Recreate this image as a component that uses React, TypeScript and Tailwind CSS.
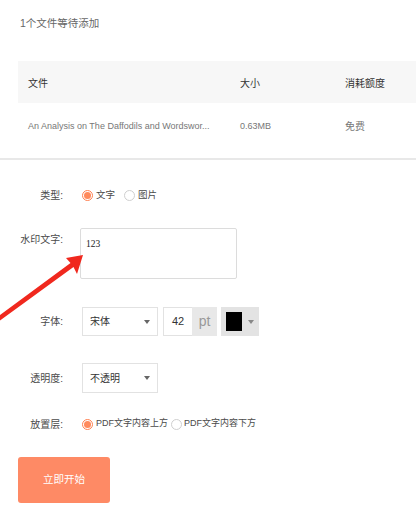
function Radio({ checked }: { checked: boolean }) {
  return checked ? (
    <span className="flex h-[11px] w-[11px] shrink-0 items-center justify-center rounded-full border border-[#ff7f50]">
      <span className="block h-[7px] w-[7px] rounded-full bg-[#ff8a5c]" />
    </span>
  ) : (
    <span className="block h-[11px] w-[11px] shrink-0 rounded-full border border-[#cfcfcf]" />
  );
}

function Caret({ color = "border-t-[#666]" }: { color?: string }) {
  return <span className={`block h-0 w-0 border-x-[3px] border-t-[4px] border-x-transparent ${color}`} />;
}

export default function App() {
  return (
    <div className="relative h-[528px] w-[416px] overflow-hidden bg-white font-['Liberation_Sans','Noto_Sans_CJK_SC',sans-serif] text-[#4a4a4a]">
      <div className="h-[32px] pl-[20px] pt-[14px] text-[10.5px] leading-[18px] text-[#666]">1个文件等待添加</div>

      <div className="ml-[18px] mt-[29px]">
        <div className="flex h-[42px] items-center bg-[#f7f7f7] pt-[3px] text-[10px] text-[#333]">
          <div className="w-[222px] pl-[10px]">文件</div>
          <div className="w-[105px]">大小</div>
          <div>消耗额度</div>
        </div>
        <div className="flex h-[47px] items-center text-[9px] text-[#777]">
          <div className="w-[222px] pl-[10px]">An Analysis on The Daffodils and Wordswor...</div>
          <div className="w-[105px]">0.63MB</div>
          <div className="text-[10px]">免费</div>
        </div>
      </div>
      <div className="mt-[8px] h-[2px] bg-[#e8e8e8]" />

      <div className="mt-[25px] flex h-[20px] items-center text-[10px]">
        <div className="ml-[18px] w-[45px] shrink-0 text-right">类型:</div>
        <div className="ml-[19px] flex items-center">
          <Radio checked />
          <span className="ml-[3px] text-[9.5px]">文字</span>
          <span className="ml-[9px] flex">
            <Radio checked={false} />
          </span>
          <span className="ml-[3px] text-[9.5px]">图片</span>
        </div>
      </div>

      <div className="mt-[23px] flex items-start text-[10px]">
        <div className="ml-[18px] mt-[5px] w-[45px] shrink-0 text-right leading-[14px]">水印文字:</div>
        <textarea
          readOnly
          defaultValue="123"
          className="ml-[17px] h-[51px] w-[157px] resize-none rounded-[2px] border border-[#dcdcdc] pl-[5px] pt-[8px] font-['Liberation_Serif',serif] text-[9.5px] leading-[14px] text-[#222] outline-none"
        />
      </div>

      <div className="mt-[28px] flex h-[29px] items-center text-[10px]">
        <div className="ml-[18px] w-[45px] shrink-0 text-right">字体:</div>
        <div className="ml-[19px] flex h-full items-stretch">
          <div className="flex w-[76px] items-center justify-between border border-[#e2e2e2] pl-[7px] pr-[7px] text-[#333]">
            <span>宋体</span>
            <Caret />
          </div>
          <div className="ml-[5px] flex">
            <div className="flex w-[29px] items-center justify-center border border-r-0 border-[#e2e2e2] text-[11px] text-[#333]">42</div>
            <div className="flex w-[25px] items-center justify-center bg-[#e8e8e8] text-[14px] text-[#999]">pt</div>
          </div>
          <div className="ml-[4px] flex w-[38px] items-center bg-[#e3e3e3] pl-[5px]">
            <span className="block h-[19px] w-[16px] bg-black" />
            <span className="ml-[6px] flex">
              <Caret color="border-t-[#888]" />
            </span>
          </div>
        </div>
      </div>

      <div className="mt-[27px] flex h-[30px] items-center text-[10px]">
        <div className="ml-[18px] w-[45px] shrink-0 text-right">透明度:</div>
        <div className="ml-[19px] flex h-full w-[76px] items-center justify-between border border-[#e2e2e2] pl-[7px] pr-[7px] text-[#333]">
          <span>不透明</span>
          <Caret />
        </div>
      </div>

      <div className="mt-[21px] flex h-[20px] items-center text-[10px]">
        <div className="ml-[18px] w-[45px] shrink-0 text-right">放置层:</div>
        <div className="ml-[19px] flex items-center text-[9px]">
          <Radio checked />
          <span className="ml-[3px]">PDF文字内容上方</span>
          <span className="ml-[3px] flex">
            <Radio checked={false} />
          </span>
          <span className="ml-[2px]">PDF文字内容下方</span>
        </div>
      </div>

      <div className="ml-[18px] mt-[23px] flex h-[46px] w-[92px] items-center justify-center rounded-[3px] bg-[#fe8a65] text-[10.5px] text-white">
        立即开始
      </div>

      <svg className="pointer-events-none absolute left-0 top-0" width="416" height="528" viewBox="0 0 416 528">
        <polygon points="-4,318 70.5,263 66,258 83,255 77,274 73.5,267 -2,322" fill="#f0281e" />
      </svg>
    </div>
  );
}
